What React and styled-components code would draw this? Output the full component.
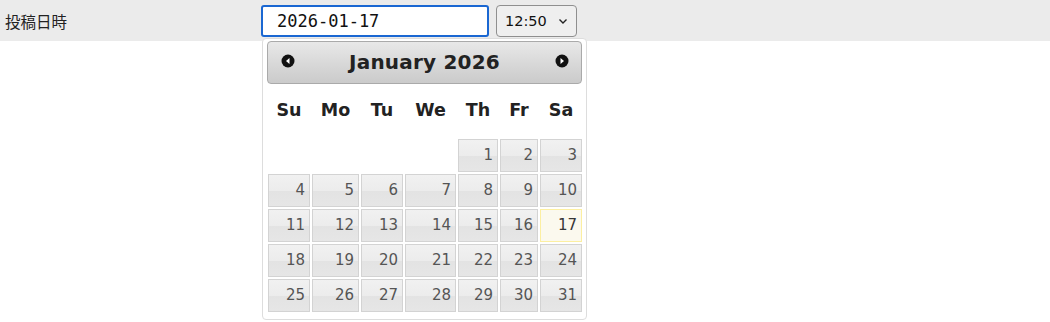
import styled, { createGlobalStyle } from "styled-components";

const GlobalStyle = createGlobalStyle`
    html, body {
        margin: 0;
        padding: 0;
        background: #fff;
    }
    body {
        min-height: 322px;
        font-family: "DejaVu Sans", Verdana, sans-serif;
        color: #222;
    }
`

// days of january 2026, the 1st is a thursday
const WEEKDAYS = ["Su", "Mo", "Tu", "We", "Th", "Fr", "Sa"];
const FIRST_WEEKDAY = 4;
const DAYS_IN_MONTH = 31;
const TODAY = 17;

const NavIcon = ({ dir }) => (
    <svg width="14" height="14" viewBox="0 0 14 14">
        <circle cx="7" cy="7" r="6.5" fill="#111" />
        {dir === "prev"
            ? <polygon points="8.5,4 5,7 8.5,10" fill="#fff" />
            : <polygon points="5.5,4 9,7 5.5,10" fill="#fff" />
        }
    </svg>
)

const Chevron = () => (
    <svg width="10" height="10" viewBox="0 0 10 10">
        <polyline points="1.5,3.5 5,7 8.5,3.5" fill="none" stroke="#222" strokeWidth="1.4" />
    </svg>
)

const App = () => {
    const cells = [];
    for (let i = 0; i < FIRST_WEEKDAY; i++) {
        cells.push(<Empty key={`e${i}`} />);
    }
    for (let d = 1; d <= DAYS_IN_MONTH; d++) {
        cells.push(
            <Day key={d} $today={d === TODAY}>{d}</Day>
        );
    }

    return (
        <>
            <GlobalStyle />
            <Page>
                <Row>
                    <Label>投稿日時</Label>
                    <Field>
                        <DateInput readOnly value="2026-01-17" />
                        <TimeSelect>
                            <span>12:50</span>
                            <Chevron />
                        </TimeSelect>
                        {/* datepicker popup, opened under the date input */}
                        <Picker>
                            <Header>
                                <NavButton $side="left"><NavIcon dir="prev" /></NavButton>
                                <Title>January 2026</Title>
                                <NavButton $side="right"><NavIcon dir="next" /></NavButton>
                            </Header>
                            <Calendar>
                                {WEEKDAYS.map(w => <WeekDay key={w}>{w}</WeekDay>)}
                                {cells}
                            </Calendar>
                        </Picker>
                    </Field>
                </Row>
            </Page>
        </>
    )
}

const Page = styled.div`
    min-height: 322px;
`
const Row = styled.div`
    display: flex;
    align-items: center;
    height: 41px;
    background-color: #ebebeb;
`
const Label = styled.div`
    width: 261px;
    padding-left: 5px;
    box-sizing: border-box;
    font-family: "Noto Sans CJK JP", "DejaVu Sans", sans-serif;
    font-size: 15.5px;
    color: #222;
`
const Field = styled.div`
    position: relative;
    display: flex;
    align-items: center;
    gap: 7px;
`
const DateInput = styled.input`
    width: 228px;
    height: 32px;
    box-sizing: border-box;
    border: 2px solid #1a67d2;
    border-radius: 3px;
    padding: 0 0 0 14px;
    font-family: "DejaVu Sans Mono", monospace;
    font-size: 17px;
    color: #111;
    background: #fff;
    outline: none;
`
const TimeSelect = styled.div`
    width: 81px;
    height: 32px;
    box-sizing: border-box;
    display: flex;
    align-items: center;
    justify-content: space-between;
    padding: 0 8px 0 8px;
    border: 1px solid #8f8f8f;
    border-radius: 4px;
    background-color: #efefef;
    font-size: 14.5px;
    color: #111;
`
const Picker = styled.div`
    position: absolute;
    z-index: 10;
    top: 33px;
    left: 1px;
    width: 325px;
    box-sizing: border-box;
    padding: 2px 4px 7px;
    background: #fff;
    border: 1px solid #dddddd;
    border-radius: 4px;
`
const Header = styled.div`
    position: relative;
    height: 43px;
    box-sizing: border-box;
    display: flex;
    align-items: center;
    justify-content: center;
    border: 1px solid #aaaaaa;
    border-radius: 4px;
    background: linear-gradient(to bottom, #e8e8e8 0%, #d6d6d6 60%, #cbcbcb 100%);
`
const Title = styled.div`
    font-weight: bold;
    font-size: 20px;
    color: #222;
    letter-spacing: 0.2px;
`
const NavButton = styled.div`
    position: absolute;
    top: 12px;
    ${props => props.$side === "left" ? "left: 13px;" : "right: 12px;"}
    width: 14px;
    height: 14px;
    display: flex;
`
const Calendar = styled.div`
    display: grid;
    grid-template-columns: 42px 47px 42px 51px 40px 38px 42px;
    grid-template-rows: 53px;
    grid-auto-rows: 33px;
    gap: 2px;
    padding: 0 1px;
`
const WeekDay = styled.div`
    display: flex;
    align-items: center;
    justify-content: center;
    font-weight: bold;
    font-size: 17.5px;
    color: #222;
`
const Empty = styled.div``
const Day = styled.div`
    box-sizing: border-box;
    display: flex;
    align-items: center;
    justify-content: flex-end;
    padding-right: 4px;
    font-size: 15px;
    border: 1px solid ${props => props.$today ? "#fcefa1" : "#d3d3d3"};
    background: ${props => props.$today
        ? "#fbf9ee"
        : "linear-gradient(to bottom, #f1f1f1 0%, #ececec 50%, #e3e3e3 51%, #e6e6e6 100%)"};
    color: ${props => props.$today ? "#363636" : "#555555"};
`

export default App;
